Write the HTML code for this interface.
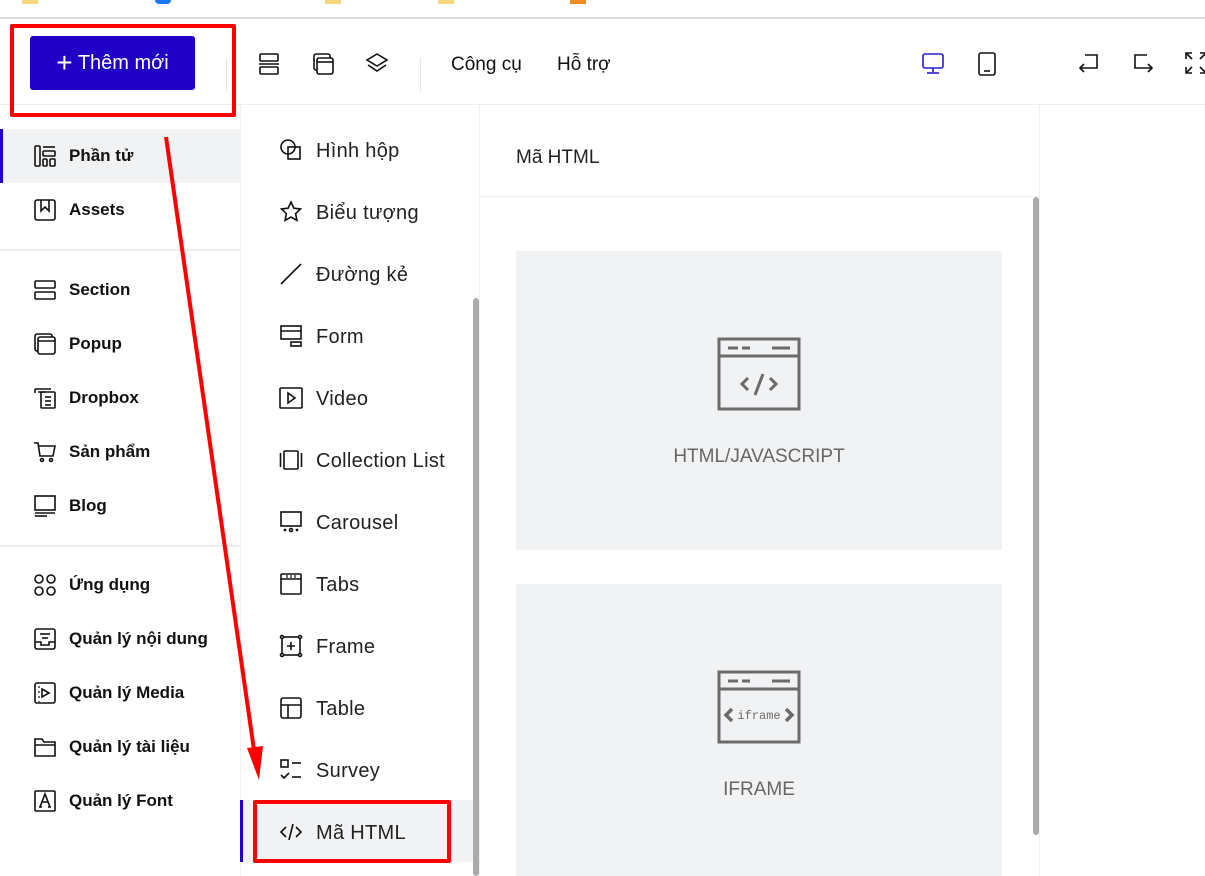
<!DOCTYPE html>
<html><head><meta charset="utf-8"><style>
*{margin:0;padding:0;box-sizing:border-box}
body{width:1205px;height:876px;overflow:hidden;background:#fff;font-family:"Liberation Sans",sans-serif;position:relative;color:#111}
.abs{position:absolute}
.ico{position:absolute;fill:none;stroke:#111;stroke-width:1.6}
.ls{position:absolute;left:69px;font-size:17px;font-weight:bold;color:#111;line-height:20px}
.ms{position:absolute;left:316px;font-size:20px;letter-spacing:.3px;color:#222;line-height:22px}
.hd{position:absolute;font-size:19px;color:#111;line-height:22px}
</style></head><body>
<!-- bookmarks bar -->
<div class="abs" style="left:0;top:0;width:1205px;height:19px;background:#fff;border-bottom:2px solid #ddd"></div>
<div class="abs" style="left:22px;top:0;width:16px;height:4px;background:#f5d77a"></div>
<div class="abs" style="left:155px;top:0;width:16px;height:4px;background:#1877f2;border-radius:0 0 8px 8px"></div>
<div class="abs" style="left:325px;top:0;width:16px;height:4px;background:#f5d77a"></div>
<div class="abs" style="left:438px;top:0;width:16px;height:4px;background:#f5d77a"></div>
<div class="abs" style="left:570px;top:0;width:16px;height:4px;background:#f08a24"></div>
<!-- header -->
<div class="abs" style="left:0;top:104px;width:1205px;height:1px;background:#eee"></div>
<div class="abs" style="left:30px;top:36px;width:165px;height:54px;background:#2000c4;border-radius:3px;color:#fff;font-size:20px;line-height:54px;text-align:center"><span style="font-size:28px;vertical-align:-3px">+</span> Thêm mới</div>
<div class="abs" style="left:226px;top:58px;width:1px;height:34px;background:#e5e5e5"></div>
<svg class="ico" style="left:258px;top:52px" width="22" height="24" viewBox="0 0 22 24"><rect x="2" y="2" width="18" height="7" rx="1"/><rect x="2" y="15" width="18" height="7" rx="1"/><line x1="1" y1="12" x2="21" y2="12"/></svg>
<svg class="ico" style="left:312px;top:52px" width="22" height="24" viewBox="0 0 22 24"><rect x="2" y="2" width="16" height="16" rx="2"/><rect x="5" y="6" width="16" height="16" rx="2" fill="#fff"/><line x1="5" y1="10" x2="21" y2="10"/></svg>
<svg class="ico" style="left:365px;top:52px" width="24" height="24" viewBox="0 0 24 24"><path d="M12 2 L22 8 L12 14 L2 8 Z"/><path d="M3 13 L12 19 L21 13"/></svg>
<div class="abs" style="left:420px;top:58px;width:1px;height:34px;background:#e5e5e5"></div>
<div class="hd" style="left:451px;top:54px">Công cụ</div>
<div class="hd" style="left:557px;top:54px">Hỗ trợ</div>
<svg class="ico" style="left:921px;top:52px;stroke:#2a1bd0" width="24" height="24" viewBox="0 0 24 24"><rect x="2" y="2" width="20" height="14" rx="2"/><line x1="12" y1="16" x2="12" y2="20"/><line x1="6" y1="21" x2="18" y2="21"/></svg>
<svg class="ico" style="left:977px;top:51px" width="20" height="26" viewBox="0 0 20 26"><rect x="2" y="2" width="16" height="22" rx="2"/><line x1="7" y1="20" x2="13" y2="20"/></svg>
<svg class="ico" style="left:1076px;top:51px" width="26" height="24" viewBox="0 0 26 24"><path d="M4 17 H21 V4 H9"/><path d="M8 13 L4 17 L8 21"/></svg>
<svg class="ico" style="left:1130px;top:51px" width="26" height="24" viewBox="0 0 26 24"><path d="M22 17 H5 V4 H17"/><path d="M18 13 L22 17 L18 21"/></svg>
<svg class="ico" style="left:1185px;top:52px" width="22" height="22" viewBox="0 0 22 22"><path d="M1 7 V1 H7 M1 1 L7 7 M1 15 V21 H7 M1 21 L7 15 M21 7 V1 H15 M21 1 L15 7 M21 15 V21 H15 M21 21 L15 15"/></svg>
<!-- left sidebar -->
<div class="abs" style="left:240px;top:105px;width:1px;height:771px;background:#eee"></div>
<div class="abs" style="left:0;top:129px;width:240px;height:54px;background:#f1f2f4"></div>
<div class="abs" style="left:0;top:129px;width:3px;height:54px;background:#2000c4"></div>
<div class="abs" style="left:0;top:249px;width:240px;height:2px;background:#eee"></div>
<div class="abs" style="left:0;top:545px;width:240px;height:2px;background:#eee"></div>
<svg class="ico" style="left:33px;top:144px" width="24" height="24" viewBox="0 0 24 24"><rect x="2" y="2" width="5" height="20" rx="1"/><line x1="10" y1="3" x2="22" y2="3"/><rect x="10" y="7" width="12" height="5" rx="1"/><rect x="10" y="15" width="4" height="7" rx="1"/><rect x="17" y="15" width="5" height="7" rx="1"/></svg>
<div class="ls" style="top:146px">Phần tử</div>
<svg class="ico" style="left:33px;top:198px" width="24" height="24" viewBox="0 0 24 24"><rect x="2" y="2" width="20" height="20" rx="2"/><path d="M8 2 V13 L12 9 L16 13 V2"/></svg>
<div class="ls" style="top:200px">Assets</div>
<svg class="ico" style="left:33px;top:278px" width="24" height="24" viewBox="0 0 24 24"><rect x="2" y="3" width="20" height="7" rx="1"/><rect x="2" y="14" width="20" height="7" rx="1"/></svg>
<div class="ls" style="top:280px">Section</div>
<svg class="ico" style="left:33px;top:332px" width="24" height="24" viewBox="0 0 24 24"><rect x="2" y="2" width="17" height="17" rx="2"/><rect x="5" y="5" width="17" height="17" rx="2" fill="#fff"/><line x1="5" y1="9" x2="22" y2="9"/></svg>
<div class="ls" style="top:334px">Popup</div>
<svg class="ico" style="left:33px;top:386px" width="24" height="24" viewBox="0 0 24 24"><path d="M2 3 H18 M2 3 V7 M5 6 H12"/><rect x="8" y="6" width="14" height="16" rx="1"/><line x1="12" y1="11" x2="18" y2="11"/><line x1="12" y1="15" x2="18" y2="15"/><line x1="12" y1="19" x2="18" y2="19"/></svg>
<div class="ls" style="top:388px">Dropbox</div>
<svg class="ico" style="left:33px;top:440px" width="24" height="24" viewBox="0 0 24 24"><path d="M1 3 H5 L7 16 H20 L22 6 H6"/><circle cx="9" cy="20" r="1.5"/><circle cx="18" cy="20" r="1.5"/></svg>
<div class="ls" style="top:442px">Sản phẩm</div>
<svg class="ico" style="left:33px;top:494px" width="24" height="24" viewBox="0 0 24 24"><rect x="2" y="2" width="20" height="14"/><line x1="2" y1="19" x2="22" y2="19"/><line x1="2" y1="22" x2="14" y2="22"/></svg>
<div class="ls" style="top:496px">Blog</div>
<svg class="ico" style="left:33px;top:573px" width="24" height="24" viewBox="0 0 24 24"><circle cx="6" cy="6" r="4"/><circle cx="18" cy="6" r="4"/><circle cx="6" cy="18" r="4"/><circle cx="18" cy="18" r="4"/></svg>
<div class="ls" style="top:575px">Ứng dụng</div>
<svg class="ico" style="left:33px;top:627px" width="24" height="24" viewBox="0 0 24 24"><rect x="2" y="2" width="20" height="20" rx="2"/><line x1="7" y1="7" x2="17" y2="7"/><line x1="9" y1="11" x2="15" y2="11"/><path d="M2 15 H8 V18 H16 V15 H22"/></svg>
<div class="ls" style="top:629px">Quản lý nội dung</div>
<svg class="ico" style="left:33px;top:681px" width="24" height="24" viewBox="0 0 24 24"><rect x="2" y="2" width="20" height="20" rx="2"/><path d="M9 8 L16 12 L9 16 Z"/><path d="M6 5 V7 M6 10 V12 M6 15 V17 M6 20 V21" stroke-width="1.2"/></svg>
<div class="ls" style="top:683px">Quản lý Media</div>
<svg class="ico" style="left:33px;top:735px" width="24" height="24" viewBox="0 0 24 24"><path d="M2 4 H9 L11 7 H22 V21 H2 Z"/><line x1="2" y1="10" x2="22" y2="10"/></svg>
<div class="ls" style="top:737px">Quản lý tài liệu</div>
<svg class="ico" style="left:33px;top:789px" width="24" height="24" viewBox="0 0 24 24"><rect x="2" y="2" width="20" height="20" rx="1"/><path d="M7 18 L12 5 L17 18 M9 13 H15 M6 18 H9 M15 18 H18"/></svg>
<div class="ls" style="top:791px">Quản lý Font</div>
<!-- middle panel -->
<div class="abs" style="left:479px;top:105px;width:1px;height:771px;background:#eee"></div>
<div class="abs" style="left:473px;top:298px;width:6px;height:578px;background:#ababab;border-radius:3px"></div>
<svg class="ico" style="left:279px;top:138px" width="24" height="24" viewBox="0 0 24 24"><circle cx="9" cy="9" r="7"/><rect x="9" y="9" width="12" height="12"/></svg>
<div class="ms" style="top:140px">Hình hộp</div>
<svg class="ico" style="left:279px;top:200px" width="24" height="24" viewBox="0 0 24 24"><path d="M12 2 L14.9 8.2 L21.5 9 L16.6 13.6 L17.9 20.3 L12 17 L6.1 20.3 L7.4 13.6 L2.5 9 L9.1 8.2 Z"/></svg>
<div class="ms" style="top:202px">Biểu tượng</div>
<svg class="ico" style="left:279px;top:262px" width="24" height="24" viewBox="0 0 24 24"><line x1="2" y1="22" x2="22" y2="2"/></svg>
<div class="ms" style="top:264px">Đường kẻ</div>
<svg class="ico" style="left:279px;top:324px" width="24" height="24" viewBox="0 0 24 24"><rect x="2" y="2" width="20" height="13"/><line x1="2" y1="7" x2="22" y2="7"/><rect x="12" y="18" width="10" height="4"/></svg>
<div class="ms" style="top:326px">Form</div>
<svg class="ico" style="left:279px;top:386px" width="24" height="24" viewBox="0 0 24 24"><rect x="1" y="2" width="22" height="20" rx="1"/><path d="M9 7 L16 12 L9 17 Z"/></svg>
<div class="ms" style="top:388px">Video</div>
<svg class="ico" style="left:279px;top:448px" width="24" height="24" viewBox="0 0 24 24"><rect x="5" y="3" width="14" height="18" rx="1"/><line x1="1.5" y1="5" x2="1.5" y2="19"/><line x1="22.5" y1="5" x2="22.5" y2="19"/></svg>
<div class="ms" style="top:450px">Collection List</div>
<svg class="ico" style="left:279px;top:510px" width="24" height="24" viewBox="0 0 24 24"><rect x="2" y="2" width="20" height="14"/><circle cx="12" cy="20" r="1.5"/><circle cx="6" cy="20" r=".6" fill="#111"/><circle cx="18" cy="20" r=".6" fill="#111"/></svg>
<div class="ms" style="top:512px">Carousel</div>
<svg class="ico" style="left:279px;top:572px" width="24" height="24" viewBox="0 0 24 24"><rect x="2" y="2" width="20" height="20" rx="1"/><line x1="2" y1="7" x2="22" y2="7"/><path d="M8 3 V6 M12 3 V6 M16 3 V6" stroke-width="1.2"/></svg>
<div class="ms" style="top:574px">Tabs</div>
<svg class="ico" style="left:279px;top:634px" width="24" height="24" viewBox="0 0 24 24"><rect x="3" y="3" width="18" height="18"/><circle cx="3" cy="3" r="1.5" fill="#fff"/><circle cx="21" cy="3" r="1.5" fill="#fff"/><circle cx="3" cy="21" r="1.5" fill="#fff"/><circle cx="21" cy="21" r="1.5" fill="#fff"/><path d="M12 8 V16 M8 12 H16"/></svg>
<div class="ms" style="top:636px">Frame</div>
<svg class="ico" style="left:279px;top:696px" width="24" height="24" viewBox="0 0 24 24"><rect x="2" y="2" width="20" height="20" rx="2"/><line x1="2" y1="9" x2="22" y2="9"/><line x1="9" y1="9" x2="9" y2="22"/></svg>
<div class="ms" style="top:698px">Table</div>
<svg class="ico" style="left:279px;top:758px" width="24" height="24" viewBox="0 0 24 24"><rect x="2" y="2" width="7" height="7"/><line x1="13" y1="5" x2="22" y2="5"/><path d="M2 17 L5 20 L10 15"/><line x1="13" y1="19" x2="22" y2="19"/></svg>
<div class="ms" style="top:760px">Survey</div>
<div class="abs" style="left:241px;top:800px;width:232px;height:62px;background:#f1f2f4"></div>
<div class="abs" style="left:240px;top:800px;width:3px;height:62px;background:#2000c4"></div>
<svg class="ico" style="left:279px;top:820px" width="24" height="24" viewBox="0 0 24 24"><path d="M7 7 L2 12 L7 17 M17 7 L22 12 L17 17 M14 4 L10 20"/></svg>
<div class="ms" style="top:822px">Mã HTML</div>
<div class="abs" style="left:253px;top:800px;width:198px;height:63px;border:4px solid #f00;border-radius:2px"></div>
<!-- right panel -->
<div class="abs" style="left:1039px;top:105px;width:1px;height:771px;background:#eee"></div>
<div class="abs" style="left:480px;top:196px;width:559px;height:1px;background:#eee"></div>
<div class="hd" style="left:516px;top:147px;color:#222">Mã HTML</div>
<div class="abs" style="left:1033px;top:197px;width:6px;height:638px;background:#ababab;border-radius:3px"></div>
<div class="abs" style="left:516px;top:251px;width:486px;height:299px;background:#f1f2f4"></div>
<svg class="abs" style="left:716px;top:336px" width="86" height="76" viewBox="0 0 86 76" fill="none" stroke="#6b6b6b" stroke-width="3"><rect x="3" y="3" width="80" height="70"/><line x1="3" y1="20" x2="83" y2="20"/><path d="M12 12 H22 M26 12 H34 M56 12 H74" /><path d="M32 42 L26 48 L32 54 M54 42 L60 48 L54 54 M47 38 L39 59"/></svg>
<div class="abs" style="left:516px;top:446px;width:486px;text-align:center;font-size:19px;color:#666">HTML/JAVASCRIPT</div>
<div class="abs" style="left:516px;top:584px;width:486px;height:292px;background:#f1f2f4"></div>
<svg class="abs" style="left:716px;top:669px" width="86" height="76" viewBox="0 0 86 76" fill="none" stroke="#6b6b6b" stroke-width="3"><rect x="3" y="3" width="80" height="70"/><line x1="3" y1="20" x2="83" y2="20"/><path d="M12 12 H22 M26 12 H34 M56 12 H74"/><path d="M16 40 L10 46 L16 52 M70 40 L76 46 L70 52" stroke-width="3.5"/><text x="43" y="50" text-anchor="middle" font-family="Liberation Mono,monospace" font-size="12" fill="#6b6b6b" stroke="none">iframe</text></svg>
<div class="abs" style="left:516px;top:779px;width:486px;text-align:center;font-size:19px;color:#666">IFRAME</div>
<!-- annotations -->
<div class="abs" style="left:10px;top:24px;width:226px;height:93px;border:4px solid #f00;border-radius:2px"></div>
<svg class="abs" style="left:0;top:0" width="1205" height="876"><line x1="166" y1="137" x2="254" y2="750" stroke="#f00" stroke-width="4"/><path d="M247 748 L263 746 L259 780 Z" fill="#f00"/></svg>
</body></html>
